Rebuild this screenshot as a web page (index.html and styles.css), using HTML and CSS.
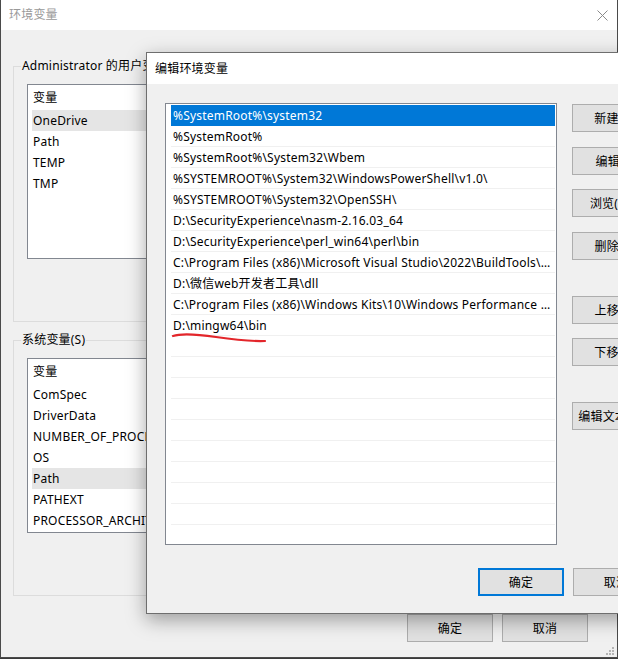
FILE: index.html
```html
<!DOCTYPE html>
<html lang="zh-CN">
<head>
<meta charset="utf-8">
<title>环境变量</title>
<link rel="stylesheet" href="styles.css">
</head>
<body>
<div class="win">
  <div class="win-title">
    <span class="win-title-text">环境变量</span>
    <svg class="close" width="11" height="11" viewBox="0 0 11 11"><path d="M0.5 0.5 L10.5 10.5 M10.5 0.5 L0.5 10.5" stroke="#8a8a8a" stroke-width="1" fill="none"/></svg>
  </div>
  <div class="win-body">
    <fieldset class="group">
      <legend>Administrator 的用户变量(U)</legend>
      <div class="vlist">
        <div class="vrow head">变量</div>
        <div class="vrow sel">OneDrive</div>
        <div class="vrow">Path</div>
        <div class="vrow">TEMP</div>
        <div class="vrow">TMP</div>
      </div>
    </fieldset>
    <fieldset class="group group-sys">
      <legend>系统变量(S)</legend>
      <div class="vlist">
        <div class="vrow head">变量</div>
        <div class="vrow">ComSpec</div>
        <div class="vrow">DriverData</div>
        <div class="vrow">NUMBER_OF_PROCESSORS</div>
        <div class="vrow">OS</div>
        <div class="vrow sel">Path</div>
        <div class="vrow">PATHEXT</div>
        <div class="vrow">PROCESSOR_ARCHITECTURE</div>
      </div>
    </fieldset>
    <div class="win-actions">
      <button class="btn">确定</button>
      <button class="btn">取消</button>
    </div>
  </div>
  <svg class="grip" width="8" height="8" viewBox="0 0 8 8" fill="#b4b4b4">
    <rect x="6" y="0" width="2" height="2"/>
    <rect x="3" y="3" width="2" height="2"/><rect x="6" y="3" width="2" height="2"/>
    <rect x="0" y="6" width="2" height="2"/><rect x="3" y="6" width="2" height="2"/><rect x="6" y="6" width="2" height="2"/>
  </svg>
</div>

<div class="dlg">
  <div class="dlg-title">编辑环境变量</div>
  <div class="dlg-body">
    <div class="dlg-main">
      <div class="plist">
        <div class="prow sel">%SystemRoot%\system32</div>
        <div class="prow">%SystemRoot%</div>
        <div class="prow">%SystemRoot%\System32\Wbem</div>
        <div class="prow">%SYSTEMROOT%\System32\WindowsPowerShell\v1.0\</div>
        <div class="prow">%SYSTEMROOT%\System32\OpenSSH\</div>
        <div class="prow">D:\SecurityExperience\nasm-2.16.03_64</div>
        <div class="prow">D:\SecurityExperience\perl_win64\perl\bin</div>
        <div class="prow">C:\Program Files (x86)\Microsoft Visual Studio\2022\BuildTools\VC\Tools\MSVC\bin</div>
        <div class="prow">D:\微信web开发者工具\dll</div>
        <div class="prow">C:\Program Files (x86)\Windows Kits\10\Windows Performance Toolkit\</div>
        <div class="prow">D:\mingw64\bin</div>
        <div class="prow"></div><div class="prow"></div><div class="prow"></div>
        <div class="prow"></div><div class="prow"></div><div class="prow"></div>
        <div class="prow"></div><div class="prow"></div><div class="prow"></div>
        <svg class="mark" width="110" height="12" viewBox="0 0 110 12"><path d="M7 5 C 14 2.5, 30 3, 50 6 S 85 10.5, 99 10" stroke="#e3262b" stroke-width="2.2" fill="none" stroke-linecap="round"/></svg>
      </div>
      <div class="side">
        <button class="btn">新建(N)</button>
        <button class="btn">编辑(E)</button>
        <button class="btn">浏览(B)...</button>
        <button class="btn">删除(D)</button>
        <button class="btn gap-lg">上移(U)</button>
        <button class="btn">下移(O)</button>
        <button class="btn gap-lg">编辑文本(T)...</button>
      </div>
    </div>
    <div class="dlg-actions">
      <button class="btn btn-default">确定</button>
      <button class="btn">取消</button>
    </div>
  </div>
</div>
</body>
</html>
```
FILE: styles.css
```css
* { box-sizing: border-box; }
html, body { margin: 0; padding: 0; }
body {
  width: 618px;
  height: 659px;
  overflow: hidden;
  background: #3a3a3a;
  position: relative;
  font-family: "Noto Sans", "Noto Sans CJK SC", sans-serif;
  font-size: 12px;
  letter-spacing: 0.2px;
  color: #000;
}

.win {
  position: relative;
  width: 618px;
  height: 658px;
  background: #f0f0f0;
  border-left: 1px solid #4a4a4a;
  border-right: 1px solid #4a4a4a;
  border-bottom: 1px solid #4a4a4a;
  display: flex;
  flex-direction: column;
}
.win-title {
  height: 30px;
  flex: none;
  background: #fff;
  display: flex;
  align-items: center;
  justify-content: space-between;
  padding: 0 9px 0 8px;
  color: #999;
  line-height: 16px;
}
.close { display: block; }

.win-body { padding: 0; }
.group {
  margin: 28px 12px 0 12px;
  border: 1px solid #dcdcdc;
  padding: 0 13px 62px 13px;
  min-width: 0;
}
.group legend {
  margin-left: -6px;
  padding: 0 1px;
  line-height: 16px;
  height: 16px;
}
.group-sys { margin-top: 10px; }
.vlist {
  margin-top: 10px;
  height: 175px;
  background: #fff;
  border: 1px solid #828790;
  padding: 0 0 0 4px;
  overflow: hidden;
}
.vrow {
  height: 21px;
  line-height: 21px;
  padding-left: 1px;
  white-space: nowrap;
}
.vrow.head { height: 25px; line-height: 25px; }
.vrow.sel { background: #e5e5e5; }

.win-actions {
  display: flex;
  justify-content: flex-end;
  gap: 9px;
  margin-top: 18px;
  padding-right: 29px;
}
.btn {
  width: 86px;
  height: 28px;
  background: #e1e1e1;
  border: 1px solid #adadad;
  font-family: inherit;
  font-size: 12px;
  letter-spacing: inherit;
  color: #000;
  padding: 0;
  margin: 0;
  white-space: nowrap;
  text-align: center;
  border-radius: 0;
}
.grip {
  position: absolute;
  right: 3px;
  bottom: 2px;
}

.dlg {
  position: absolute;
  left: 146px;
  top: 52px;
  width: 531px;
  height: 562px;
  border: 1px solid #6e6e6e;
  background: #f0f0f0;
  box-shadow: 0 6px 18px rgba(0, 0, 0, 0.35);
  display: flex;
  flex-direction: column;
}
.dlg-title {
  height: 31px;
  flex: none;
  background: #fff;
  display: flex;
  align-items: center;
  padding-left: 8px;
  line-height: 16px;
}
.dlg-body {
  padding: 19px 17px 0 18px;
}
.dlg-main {
  display: flex;
  gap: 15px;
}
.plist {
  position: relative;
  width: 392px;
  height: 442px;
  flex: none;
  background: #fff;
  border: 1px solid #828790;
  padding: 1px 1px 0 5px;
  overflow: hidden;
}
.prow {
  height: 21px;
  line-height: 22px;
  border-bottom: 1px solid #f0f0f0;
  padding: 0 4px 0 2px;
  white-space: nowrap;
  overflow: hidden;
  text-overflow: ellipsis;
}
.prow.sel {
  background: #0078d7;
  color: #fff;
  border-bottom-color: #0078d7;
}
.mark {
  position: absolute;
  left: 0;
  top: 227px;
}
.side {
  display: flex;
  flex-direction: column;
  padding-top: 1px;
  gap: 15px;
}
.side .btn:nth-child(3) { margin-top: -1px; }
.side .gap-lg { margin-top: 21px; }
.side .btn:nth-child(6) { margin-top: -1px; }
.dlg-actions {
  display: flex;
  justify-content: flex-end;
  gap: 9px;
  margin-top: 23px;
}
.btn-default {
  border: 2px solid #0078d7;
}
```
